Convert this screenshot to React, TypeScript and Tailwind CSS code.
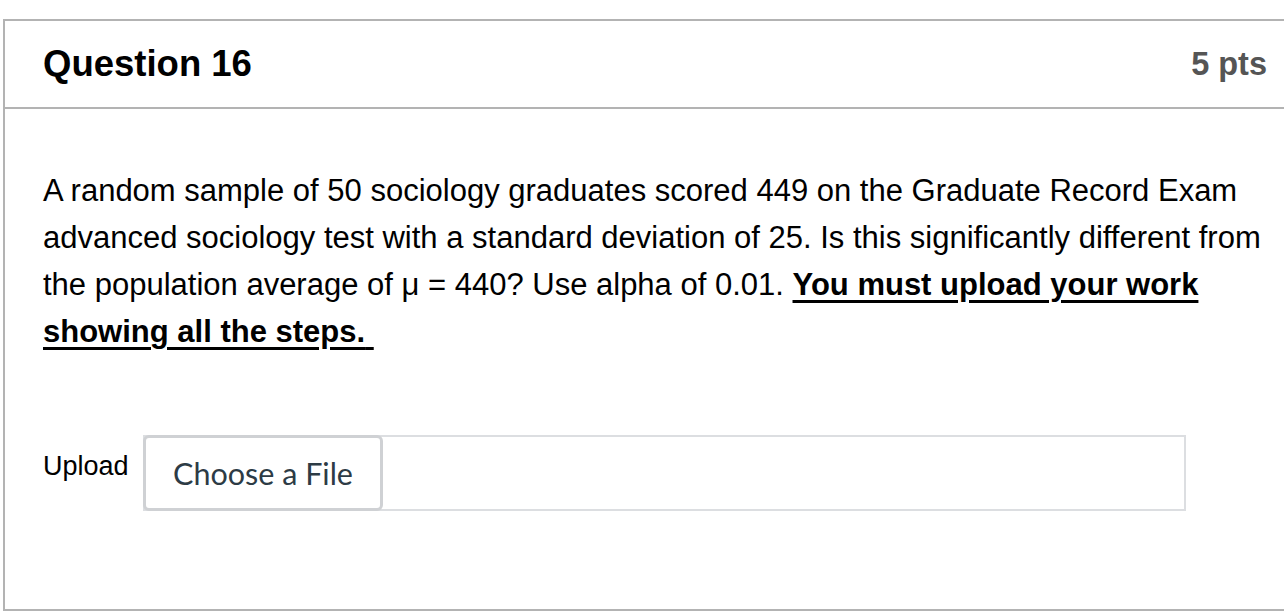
import React from "react";

const App: React.FC = () => {
  return (
    <div className="w-[1284px] h-[613px] overflow-hidden bg-white font-['Liberation_Sans',Arial,sans-serif] text-black">
      <div className="ml-[3px] mt-[19px] w-[1300px] border-2 border-[#b3b3b3]">
        {/* header */}
        <div className="h-[88px] flex items-center justify-between pl-[38px] border-b-2 border-[#b3b3b3]">
          <h2 className="text-[36.5px] font-bold leading-none">Question 16</h2>
          <span className="text-[32.5px] font-bold leading-none text-[#555] mr-[34px]">5 pts</span>
        </div>

        {/* body */}
        <div className="pl-[38px] pt-[58px] h-[500px]">
          <p className="text-[31px] leading-[47px] whitespace-nowrap">
            A random sample of 50 sociology graduates scored 449 on the Graduate Record Exam
            <br />
            advanced sociology test with a standard deviation of 25. Is this significantly different from
            <br />
            the population average of μ = 440? Use alpha of 0.01.{" "}
            <strong className="underline underline-offset-[5px] whitespace-pre">
              You must upload your work
              <br />
              showing all the steps.{" "}
            </strong>
          </p>

          <div className="mt-[80px] flex items-start">
            <span className="text-[27px] leading-none pt-[18px] w-[100px]">Upload</span>
            <div className="w-[1043px] h-[76px] border-2 border-[#dcdee1] flex">
              <button className="w-[240px] -ml-[2px] -my-[2px] h-[76px] border-[3px] border-[#cfd1d4] rounded-[6px] bg-white text-[30.5px] text-[#2d3b45] font-['Lato',sans-serif] pt-[2px]">
                Choose a File
              </button>
            </div>
          </div>
        </div>
      </div>
    </div>
  );
};

export default App;
